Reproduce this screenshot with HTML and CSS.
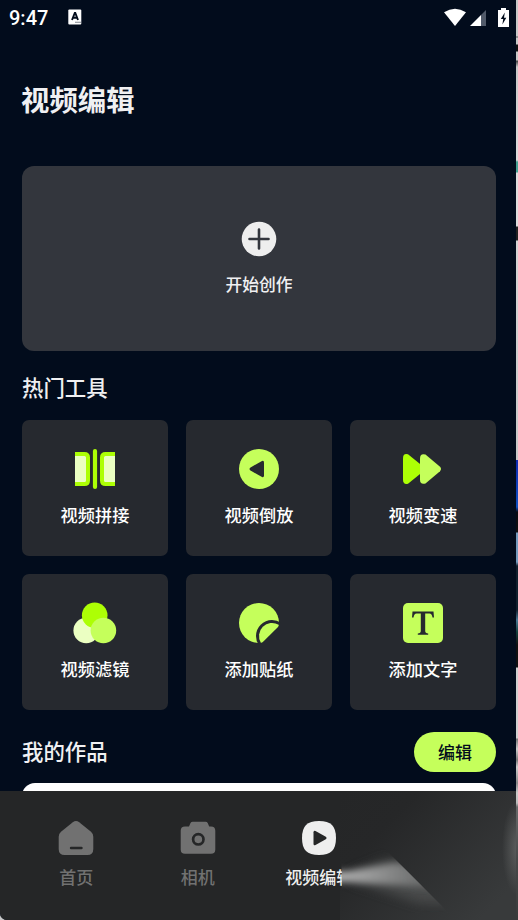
FILE: index.html
```html
<!DOCTYPE html>
<html lang="zh-CN">
<head>
<meta charset="utf-8">
<title>视频编辑</title>
<link rel="stylesheet" href="styles.css">
</head>
<body>
<div class="desktop">
<main class="phone">
  <header class="status">
    <span class="time">9:47</span>
    <svg class="app-badge" width="14" height="16" viewBox="0 0 14 16"><rect x=".3" y=".5" width="13" height="15" rx="1" fill="#fff"/><path d="M4 11 6.8 4h.5L10 11M5 8.8h4" fill="none" stroke="#020c1c" stroke-width="1.9"/><path d="M7.500 13.300h1m1 0h1m1 0h1" stroke="#020c1c" stroke-width="1.100"/></svg>
    <div class="signals">
      <svg width="24" height="20" viewBox="0 0 24 20"><path d="M1 4.200Q12-2.800 23 4.200L12 18Z" fill="#fff"/></svg>
      <svg width="18" height="20" viewBox="0 0 18 20"><path d="M1 18 12 7v11Z" fill="#fff"/><path d="M12 7 17 2v16h-5Z" fill="#515a69"/></svg>
      <svg class="battery" width="11" height="20" viewBox="0 0 11 20"><path d="M0 2h3V0h5v2h3v17H0Z" fill="#fff"/><path d="M6.800 4.500 2.800 11h2.400l-.8 5.500L8.300 9.700H6Z" fill="#020c1c"/></svg>
    </div>
  </header>
  <h1>视频编辑</h1>
  <button class="create">
    <svg width="36" height="36" viewBox="0 0 36 36"><circle cx="18" cy="18" r="17.300" fill="#eee"/><path d="M18 8.500v19M8.500 18h19" stroke="#33363d" stroke-width="2.600" stroke-linecap="round"/></svg>
    <span>开始创作</span>
  </button>
  <h2 class="tools-title">热门工具</h2>
  <section class="tools">
    <button class="tool"><svg viewBox="0 0 44 44"><path d="M2 7h9q4 0 4 4v22q0 4-4 4H2ZM42 7h-9q-4 0-4 4v22q0 4 4 4h9Z" fill="#ebffc2"/><path d="M2 7h9.500q3.500 0 3.500 3.500v23q0 3.500-3.500 3.500H2M42 7h-9.500q-3.500 0-3.500 3.500v23q0 3.500 3.500 3.500H42" fill="none" stroke="#adff05" stroke-width="4"/><path d="M22 4v36" stroke="#adff05" stroke-width="4.200" stroke-linecap="round"/></svg><span>视频拼接</span></button>
    <button class="tool"><svg viewBox="0 0 44 44"><circle cx="22" cy="22" r="20" fill="#c5ff5b"/><path d="M13.500 20.400 25 14q2-.8 2 1.500v13q0 2.300-2 1.500L13.500 23.600q-2-1.600 0-3.200Z" fill="#26292f"/></svg><span>视频倒放</span></button>
    <button class="tool"><svg viewBox="0 0 44 44"><path d="M2 11.500Q2 6 7 7.300L24 21v2L7 36.700q-5 1.300-5-4.200Z" fill="#adff05"/><path d="M19 11.500q0-5.500 5.500-4L39 19.800q2 2.200 0 4.400L24.500 36.500q-5.500 1.500-5.500-4Z" fill="#c5ff5b"/></svg><span>视频变速</span></button>
    <button class="tool"><svg viewBox="0 0 44 44"><circle cx="13.200" cy="29.500" r="12.800" fill="#ebffc2"/><circle cx="21.700" cy="14.300" r="12.800" fill="#adff05"/><circle cx="30.400" cy="29.500" r="12.800" fill="#c5ff5b"/></svg><span>视频滤镜</span></button>
    <button class="tool"><svg viewBox="0 0 44 44"><circle cx="22" cy="22" r="20" fill="#c5ff5b"/><circle cx="35" cy="35" r="16" fill="#26292f"/><path d="M41.660 23.840A13 13 0 0 0 23.840 41.660q1 .2 2-.7L41 26q1-1 .66-2.160Z" fill="#c5ff5b"/></svg><span>添加贴纸</span></button>
    <button class="tool"><svg viewBox="0 0 44 44"><rect x="2" y="2" width="40" height="40" rx="5" fill="#c5ff5b"/><path d="M11.500 10.500h21l.5 6h-1.500q-.6-3.800-3-4h-4.300V30q0 2.200 3 2.600v1.200H16.800v-1.200q3-.4 3-2.600V12.500h-4.300q-2.400.2-3 4H11Z" fill="#26292f"/></svg><span>添加文字</span></button>
  </section>
  <section class="works">
    <h2>我的作品</h2>
    <button class="edit">编辑</button>
  </section>
  <div class="work-peek"><div class="work-card"></div></div>
  <nav class="tabs">
    <a class="tab"><svg viewBox="0 0 36 36"><path d="M14.800 2.200q3.200-2.600 6.400 0L33 11.800q2.300 2 2.300 5V29q0 6-6 6H6.700q-6 0-6-6V16.800q0-3 2.300-5Z" fill="currentColor"/><path d="M13 28h10.500" stroke="#252627" stroke-width="2.400" stroke-linecap="round"/></svg><span>首页</span></a>
    <a class="tab"><svg viewBox="0 0 36 36"><path d="M9 6.500 10.500 3q.7-1.200 2.300-1.200h12.700q1.600 0 2.200 1.200l1.500 3.500H31q4.300 0 4.300 4.300V29.500q0 4.300-4.300 4.300H5q-4.300 0-4.300-4.300V10.800q0-4.300 4.300-4.300Z" fill="currentColor"/><circle cx="18.300" cy="19.300" r="5.200" fill="none" stroke="#252627" stroke-width="2.700"/></svg><span class="up">相机</span></a>
    <a class="tab active"><svg viewBox="0 0 36 36"><path d="M18 1Q27 1 31 5t4 13q0 9-4 13t-13 4q-9 0-13-4T1 18Q1 9 5 5T18 1Z" fill="currentColor"/><path d="M12.500 12.300q0-2.300 2-1.300l10.300 5.800q1.800 1.200 0 2.400L14.500 25q-2 1-2-1.300Z" fill="#252627"/></svg><span class="up">视频编辑</span></a>
    <svg class="glow" viewBox="340 791 176 129" aria-hidden="true">
      <defs>
        <linearGradient id="shade" x1="0" y1="0" x2="1" y2=".7"><stop offset="0" stop-color="#252627"/><stop offset=".3" stop-color="#262728"/><stop offset="1" stop-color="#383a3b"/></linearGradient>
        <linearGradient id="beam" gradientUnits="userSpaceOnUse" x1="342" y1="0" x2="440" y2="0"><stop offset="0" stop-color="#b0b0b0"/><stop offset=".5" stop-color="#858686"/><stop offset="1" stop-color="#5c5e5e"/></linearGradient>
        <filter id="soft" x="-20%" y="-50%" width="140%" height="200%"><feGaussianBlur stdDeviation="3.500"/></filter>
        <filter id="wide" x="-20%" y="-50%" width="140%" height="200%"><feGaussianBlur stdDeviation="6"/></filter>
        <clipPath id="edge"><path d="M341.500 845H380q6 4 12 11l57 57H341.500Z"/></clipPath>
        <radialGradient id="right"><stop offset="0" stop-color="#5d5f5f"/><stop offset="1" stop-color="#5d5f5f" stop-opacity="0"/></radialGradient>
      </defs>
      <path d="M340 791h176v129H340V888h2v-19h-2Z" fill="url(#shade)"/>
      <g clip-path="url(#edge)"><path d="M350 874 385 860H450V903H420L350 880Z" fill="#555757" opacity=".7" filter="url(#wide)"/><path d="M325 872 350 871 395 863 450 870V889L400 885 350 882 325 882Z" fill="url(#beam)" filter="url(#soft)"/></g>
      <ellipse cx="518" cy="848" rx="16" ry="48" fill="url(#right)"/>
    </svg>
  </nav>
</main>
<aside class="backdrop"></aside>
</div>
</body>
</html>
```
FILE: styles.css
```css
* { box-sizing: border-box; }
body { margin: 0; background: #c8c8c8; font-family: "Noto Sans CJK SC", sans-serif; color: #f0f0f2; }
h1, h2, button { margin: 0; padding: 0; border: 0; font: inherit; color: inherit; }
svg { display: block; flex: none; }
.desktop { display: flex; width: 518px; height: 920px; overflow: hidden; }
.phone { width: 516px; height: 920px; display: flex; flex-direction: column; background: #020c1c; border-bottom-left-radius: 7px; overflow: hidden; }
.status { height: 34px; flex: none; display: flex; align-items: center; padding: 0 7px 0 9px; color: #fff; }
.time { font: 500 20px/34px Roboto, sans-serif; width: 59px; padding-top: 1px; }
.signals { display: flex; align-items: center; margin-left: auto; gap: 2px; padding-top: 1px; }
.battery { margin-left: 9px; }
h1 { font-size: 28.400px; line-height: 40px; font-weight: 700; margin: 45px 21px 0; height: 40px; }
.create { margin: 47px 20px 0 22px; height: 185px; flex: none; border-radius: 12px; background: #33363d; display: flex; flex-direction: column; align-items: center; justify-content: flex-start; padding-top: 54.500px; }
.create span { font-size: 16.800px; line-height: 24px; margin-top: 15px; font-weight: 500; }
h2 { font-size: 21.400px; line-height: 32px; font-weight: 500; }
.tools-title { margin: 20px 22px 0; height: 32px; }
.tools { display: grid; grid-template-columns: repeat(3, 146px); grid-auto-rows: 136px; gap: 18px; margin: 17px 0 0 22px; }
.tool { border-radius: 7px; background: #26292f; color: #fff; display: flex; flex-direction: column; align-items: center; padding-top: 27px; }
.tool svg { width: 44px; height: 44px; }
.tool span { font-size: 17.200px; line-height: 24px; margin-top: 12px; font-weight: 500; }
.works { display: flex; align-items: center; justify-content: space-between; height: 40px; margin: 22px 20px 0 22px; flex: none; }
.works h2 { padding-bottom: 2px; }
.edit { width: 82px; height: 40px; border-radius: 20px; background: #c5ff5b; color: #020c1c; font-size: 17px; font-weight: 500; padding-bottom: 2px; }
.work-peek { height: 8px; margin: 11px 20px 0 22px; overflow: hidden; flex: none; }
.work-card { height: 30px; border-radius: 13px; background: #fff; }
.tabs { position: relative; flex: 1; background: #252627; display: flex; padding: 29px 0 0 15.500px; }
.tab { width: 121.500px; flex: none; display: flex; flex-direction: column; align-items: center; color: #717171; }
.tab svg { width: 36px; height: 36px; }
.tab span { font-size: 17px; line-height: 24px; margin-top: 9px; white-space: nowrap; font-weight: 500; }
.active { color: #eee; }
.glow { position: absolute; left: 340px; top: 0; width: 176px; height: 129px; }
.backdrop { width: 2px; background: linear-gradient(#c8c8c8 36px, #555 37px, #c8c8c8 38px, #c8c8c8 44px, #111 45px, #111 51px, #c8c8c8 52px, #c8c8c8 60px, #444 61px, #c8c8c8 67px, #ddd 160px, #48a394 162px, #48a394 172px, #ddd 173px, #ddd 226px, #222 227px, #222 240px, #d5d5d5 241px, #c8c8c8 460px, #102bb0 460px, #1050c0 507px, #090c12 512px, #111 532px, #739abd 533px, #739abd 562px, #10202d 566px, #10202d 610px, #4a7894 620px, #13403c 632px, #111 645px, #111 667px, #d0d0d0 668px, #d0d0d0 738px, #777 739px, #ccc 749px, #777 760px, #ccc 767px, #888 783px, #ccc 793px, #bbb 803px, #676969 807px, #474949 860px, #393b3b); }
```
